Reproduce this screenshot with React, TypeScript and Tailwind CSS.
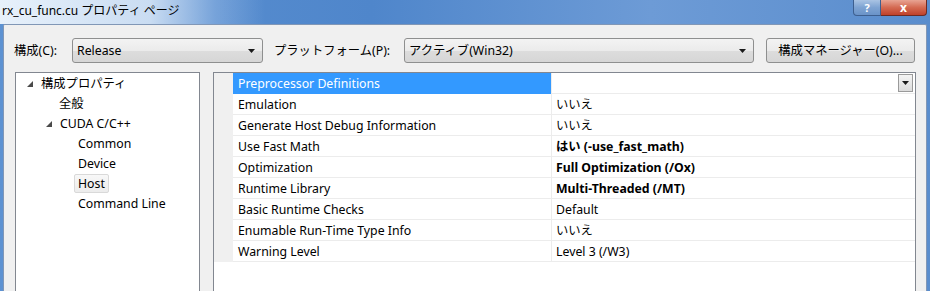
import React from "react";

const font = "font-['Noto_Sans','Noto_Sans_CJK_JP',sans-serif]";

type TreeItem = {
  label: string;
  pad: string;
  arrow?: boolean;
  selected?: boolean;
};

const treeItems: TreeItem[] = [
  { label: "構成プロパティ", pad: "pl-[11px]", arrow: true },
  { label: "全般", pad: "pl-[39px]" },
  { label: "CUDA C/C++", pad: "pl-[30px]", arrow: true },
  { label: "Common", pad: "pl-[58px]" },
  { label: "Device", pad: "pl-[58px]" },
  { label: "Host", pad: "pl-[58px]", selected: true },
  { label: "Command Line", pad: "pl-[58px]" },
];

type Prop = { name: string; value: string; bold?: boolean };

const props: Prop[] = [
  { name: "Preprocessor Definitions", value: "" },
  { name: "Emulation", value: "いいえ" },
  { name: "Generate Host Debug Information", value: "いいえ" },
  { name: "Use Fast Math", value: "はい (-use_fast_math)", bold: true },
  { name: "Optimization", value: "Full Optimization (/Ox)", bold: true },
  { name: "Runtime Library", value: "Multi-Threaded (/MT)", bold: true },
  { name: "Basic Runtime Checks", value: "Default" },
  { name: "Enumable Run-Time Type Info", value: "いいえ" },
  { name: "Warning Level", value: "Level 3 (/W3)" },
];

function Expander() {
  return (
    <svg width="6" height="6" viewBox="0 0 6 6" className="mr-[4px] mt-[1px]">
      <polygon points="6,0 6,6 0,6" fill="#4a4a4a" />
    </svg>
  );
}

function DownArrow() {
  return (
    <svg width="7" height="4" viewBox="0 0 7 4">
      <polygon points="0,0 7,0 3.5,4" fill="#1a1a1a" />
    </svg>
  );
}

function Combo({ value, width }: { value: string; width: string }) {
  return (
    <div
      className={`${width} h-[25px] flex items-center justify-between pl-[4px] pr-[7px] rounded-[3px] border border-[#8e8f8f] bg-[linear-gradient(#f3f3f3,#ebebeb_50%,#dddddd_50%,#d6d6d6)] text-black`}
    >
      <span className="pt-[1px]">{value}</span>
      <DownArrow />
    </div>
  );
}

export default function App() {
  return (
    <div
      className={`${font} text-[12.3px] w-[930px] h-[291px] overflow-hidden flex flex-col bg-[linear-gradient(90deg,#5d92d2,#4f86cb_40%,#6d9bd6_70%,#5a8dcd)]`}
    >
      {/* title bar */}
      <div className="h-[24px] flex items-start shrink-0 bg-[linear-gradient(90deg,rgba(236,244,252,0.97),rgba(214,229,246,0.9)_150px,rgba(160,192,232,0.45)_215px,rgba(120,160,215,0)_265px)]">
        <span className="pl-[2px] pt-[2px] text-[12px] leading-[18px] text-black">
          rx_cu_func.cu プロパティ ページ
        </span>
        <div className="ml-auto mr-[3px] flex">
          <div className="w-[28px] h-[16px] flex items-center justify-center rounded-bl-[4px] border border-t-0 border-[#3d5f8f] bg-[linear-gradient(#a9c3e3,#7ea3d2_50%,#6a93c8)] text-[11px] font-bold text-white leading-none">
            ?
          </div>
          <div className="w-[46px] h-[16px] flex items-center justify-center rounded-br-[4px] border border-l-0 border-t-0 border-[#6e2a22] bg-[linear-gradient(#e8a493,#d46a52_50%,#c0412a)] text-[12px] font-bold text-white leading-none">
            x
          </div>
        </div>
      </div>

      {/* client area */}
      <div className="ml-[3px] w-[924px] flex-1 bg-[#f0f0f0] border-l border-t border-r border-[#8197b6] rounded-t-[2px] pl-[10px] pt-[13px] flex flex-col">
        <div className="flex items-center h-[25px] text-black">
          <span className="w-[58px] pt-[1px]">構成(C):</span>
          <Combo value="Release" width="w-[191px]" />
          <span className="ml-[11px] w-[130px] pt-[1px]">プラットフォーム(P):</span>
          <Combo value="アクティブ(Win32)" width="w-[350px]" />
          <div className="ml-[12px] w-[149px] h-[25px] pt-[1px] flex items-center justify-center rounded-[3px] border border-[#8e8f8f] bg-[linear-gradient(#f3f3f3,#ebebeb_50%,#dddddd_50%,#d6d6d6)]">
            構成マネージャー(O)...
          </div>
        </div>

        <div className="mt-[9px] flex gap-[13px] text-black">
          {/* tree */}
          <div className="ml-[1px] w-[185px] h-[240px] bg-white border border-[#828790]">
            {treeItems.map((item) => (
              <div key={item.label} className={`h-[20px] flex items-center ${item.pad}`}>
                {item.arrow && <Expander />}
                <span
                  className={`px-[3px] h-[19px] pt-[2px] flex items-center border rounded-[2px] ${
                    item.selected
                      ? "border-[#d9d9d9] bg-[linear-gradient(#f8f8f8,#ececec)]"
                      : "border-transparent"
                  }`}
                >
                  {item.label}
                </span>
              </div>
            ))}
          </div>

          {/* property grid */}
          <div className="w-[703px] h-[240px] bg-white border border-[#828790]">
            {props.map((p, i) => (
              <div key={p.name} className="flex h-[21px]">
                <div className="w-[19px] bg-[#f0f0f0]" />
                <div
                  className={`w-[318px] pl-[5px] pt-[2px] flex items-center border-b ${
                    i === 0
                      ? "bg-[#3399ff] text-white border-[#3399ff]"
                      : "border-[#ececec]"
                  }`}
                >
                  {p.name}
                </div>
                <div
                  className={`flex-1 pl-[4px] pt-[2px] flex items-center border-l border-b border-[#ececec] ${
                    p.bold ? "font-bold" : ""
                  }`}
                >
                  {p.value}
                  {i === 0 && (
                    <div className="ml-auto mr-[2px] -mt-[2px] w-[15px] h-[18px] flex items-center justify-center border border-[#9a9a9a] bg-[linear-gradient(#f4f4f4,#dcdcdc)]">
                      <DownArrow />
                    </div>
                  )}
                </div>
              </div>
            ))}
          </div>
        </div>
      </div>
    </div>
  );
}
